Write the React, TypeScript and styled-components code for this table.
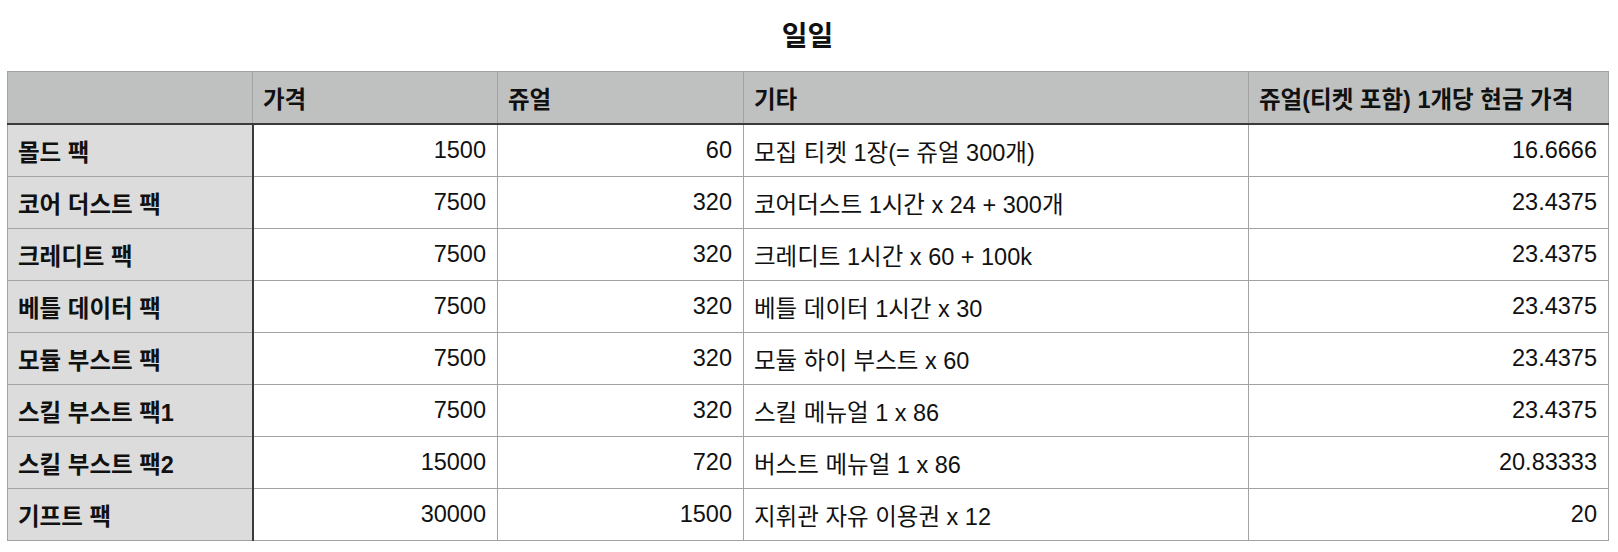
import React from "react";
import styled, { createGlobalStyle } from "styled-components";

const GlobalStyle = createGlobalStyle`
  body {
    margin: 0;
    background: #fff;
    font-family: "Liberation Sans", "Noto Sans CJK KR", sans-serif;
    color: #111;
  }
`;

const Page = styled.div`
  padding: 18px 10px 0 7px;
`;

const Title = styled.h2`
  margin: 0 0 15px;
  text-align: center;
  font-size: 28px;
  font-weight: 700;
  line-height: 38px;
`;

const Table = styled.table`
  width: 1601px;
  border-collapse: collapse;
  font-size: 23.5px;
  table-layout: fixed;
`;

const HeadCell = styled.th`
  background: #bfc1c0;
  border: 1px solid #a3a3a3;
  border-bottom: 2px solid #3a3a3a;
  height: 51px;
  padding: 0 10px;
  text-align: left;
  font-weight: 700;
`;

const RowHead = styled.th`
  background: #dcdcdc;
  border: 1px solid #a3a3a3;
  border-right: 2px solid #3a3a3a;
  height: 51px;
  padding: 0 10px;
  text-align: left;
  font-weight: 700;
`;

const Cell = styled.td<{ $align?: "left" | "right" }>`
  border: 1px solid #a3a3a3;
  height: 51px;
  padding: 0 11px 0 10px;
  text-align: ${(p) => p.$align ?? "left"};
`;

const rows = [
  ["몰드 팩", "1500", "60", "모집 티켓 1장(= 쥬얼 300개)", "16.6666"],
  ["코어 더스트 팩", "7500", "320", "코어더스트 1시간 x 24 + 300개", "23.4375"],
  ["크레디트 팩", "7500", "320", "크레디트 1시간 x 60 + 100k", "23.4375"],
  ["베틀 데이터 팩", "7500", "320", "베틀 데이터 1시간 x 30", "23.4375"],
  ["모듈 부스트 팩", "7500", "320", "모듈 하이 부스트 x 60", "23.4375"],
  ["스킬 부스트 팩1", "7500", "320", "스킬 메뉴얼 1 x 86", "23.4375"],
  ["스킬 부스트 팩2", "15000", "720", "버스트 메뉴얼 1 x 86", "20.83333"],
  ["기프트 팩", "30000", "1500", "지휘관 자유 이용권 x 12", "20"],
];

export default function App() {
  return (
    <Page>
      <GlobalStyle />
      <Title>일일</Title>
      <Table>
        <colgroup>
          <col style={{ width: 245 }} />
          <col style={{ width: 245 }} />
          <col style={{ width: 246 }} />
          <col style={{ width: 505 }} />
          <col style={{ width: 360 }} />
        </colgroup>
        <thead>
          <tr>
            <HeadCell />
            <HeadCell>가격</HeadCell>
            <HeadCell>쥬얼</HeadCell>
            <HeadCell>기타</HeadCell>
            <HeadCell>쥬얼(티켓 포함) 1개당 현금 가격</HeadCell>
          </tr>
        </thead>
        <tbody>
          {rows.map(([name, price, jewel, etc, per]) => (
            <tr key={name}>
              <RowHead>{name}</RowHead>
              <Cell $align="right">{price}</Cell>
              <Cell $align="right">{jewel}</Cell>
              <Cell>{etc}</Cell>
              <Cell $align="right">{per}</Cell>
            </tr>
          ))}
        </tbody>
      </Table>
    </Page>
  );
}
